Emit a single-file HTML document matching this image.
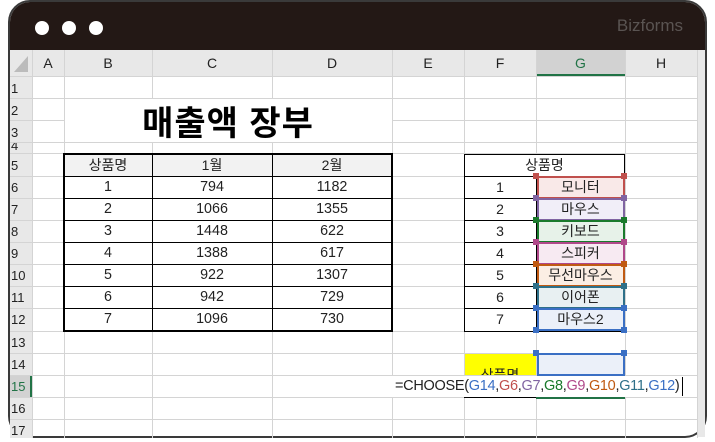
<!DOCTYPE html>
<html><head><meta charset="utf-8"><style>
*{margin:0;padding:0;box-sizing:border-box}
body{width:715px;height:440px;background:#fff;position:relative;overflow:hidden;font-family:"Liberation Sans","Noto Sans CJK KR",sans-serif}
.win{position:absolute;left:8px;top:0;width:699px;height:438px;border:2px solid #3a3a3a;border-radius:22px;overflow:hidden;background:#fff}
.bar{position:absolute;left:0;top:0;width:100%;height:48px;background:#231815}
.dot{position:absolute;top:19px;width:14px;height:14px;border-radius:50%;background:#fff}
.abs{position:absolute}
.t{position:absolute;font-size:14px;color:#222;text-align:center;display:flex;align-items:center;justify-content:center}
</style></head><body>
<div class="win">
<div class="bar"></div>
<div class="dot" style="left:25px"></div><div class="dot" style="left:52px"></div><div class="dot" style="left:79px"></div>
<div class="abs" style="right:22px;top:14px;color:#5a5452;font-size:17px">Bizforms</div>
</div>
<svg class="abs" style="left:0;top:0" width="715" height="440">
<rect x="10" y="50" width="687" height="26" fill="#e8e8e8"/>
<rect x="10" y="76" width="22" height="362" fill="#e8e8e8"/>
<rect x="536" y="50" width="89" height="26" fill="#d2d2d2"/>
<rect x="536" y="74" width="89" height="2" fill="#217346"/>
<rect x="10" y="375" width="22" height="22" fill="#d2d2d2"/>
<rect x="30" y="375" width="2" height="22" fill="#217346"/>
<polygon points="28,56 28,72 14,72" fill="#bbb"/>
<rect x="697" y="50" width="8" height="387" fill="#e8e8e8"/>
<g stroke="#d4d4d4" stroke-width="1">
<line x1="32.5" y1="50" x2="32.5" y2="438"/><line x1="64.5" y1="50" x2="64.5" y2="438"/><line x1="152.5" y1="50" x2="152.5" y2="438"/><line x1="272.5" y1="50" x2="272.5" y2="438"/><line x1="392.5" y1="50" x2="392.5" y2="438"/><line x1="464.5" y1="50" x2="464.5" y2="438"/><line x1="536.5" y1="50" x2="536.5" y2="438"/><line x1="625.5" y1="50" x2="625.5" y2="438"/><line x1="697.5" y1="50" x2="697.5" y2="438"/>
<line x1="10" y1="76.5" x2="697" y2="76.5"/><line x1="10" y1="98.5" x2="697" y2="98.5"/><line x1="10" y1="120.5" x2="697" y2="120.5"/><line x1="10" y1="142.5" x2="697" y2="142.5"/><line x1="10" y1="153.5" x2="697" y2="153.5"/><line x1="10" y1="176.5" x2="697" y2="176.5"/><line x1="10" y1="198.5" x2="697" y2="198.5"/><line x1="10" y1="220.5" x2="697" y2="220.5"/><line x1="10" y1="242.5" x2="697" y2="242.5"/><line x1="10" y1="264.5" x2="697" y2="264.5"/><line x1="10" y1="286.5" x2="697" y2="286.5"/><line x1="10" y1="308.5" x2="697" y2="308.5"/><line x1="10" y1="331.5" x2="697" y2="331.5"/><line x1="10" y1="353.5" x2="697" y2="353.5"/><line x1="10" y1="375.5" x2="697" y2="375.5"/><line x1="10" y1="397.5" x2="697" y2="397.5"/><line x1="10" y1="419.5" x2="697" y2="419.5"/>
</g>
<rect x="65" y="99" width="327" height="43" fill="#fff"/>
<rect x="64" y="154" width="328" height="22" fill="#f2f2f2"/>
<g fill="none" stroke="#000">
<rect x="64" y="154" width="328" height="177" stroke-width="2"/>
<g stroke-width="1"><line x1="152.5" y1="154" x2="152.5" y2="331"/><line x1="272.5" y1="154" x2="272.5" y2="331"/>
<line x1="64" y1="176.5" x2="392" y2="176.5"/><line x1="64" y1="198.5" x2="392" y2="198.5"/><line x1="64" y1="220.5" x2="392" y2="220.5"/><line x1="64" y1="242.5" x2="392" y2="242.5"/><line x1="64" y1="264.5" x2="392" y2="264.5"/><line x1="64" y1="286.5" x2="392" y2="286.5"/><line x1="64" y1="308.5" x2="392" y2="308.5"/>
<rect x="464.5" y="154.5" width="160" height="177"/>
<line x1="464" y1="176.5" x2="536" y2="176.5"/><line x1="464" y1="198.5" x2="536" y2="198.5"/><line x1="464" y1="220.5" x2="536" y2="220.5"/><line x1="464" y1="242.5" x2="536" y2="242.5"/><line x1="464" y1="264.5" x2="536" y2="264.5"/><line x1="464" y1="286.5" x2="536" y2="286.5"/><line x1="464" y1="308.5" x2="536" y2="308.5"/><line x1="536.5" y1="176" x2="536.5" y2="331"/></g>
</g>
<rect x="465" y="155" width="159" height="21" fill="#fff"/>
<g stroke-width="2">
<rect x="538" y="177" width="86" height="21" fill="#f9e9e8" stroke="#c0504d"/>
<rect x="538" y="199" width="86" height="21" fill="#f1eef8" stroke="#8064a2"/>
<rect x="538" y="221" width="86" height="21" fill="#e7f2e9" stroke="#1a7a2c"/>
<rect x="538" y="243" width="86" height="21" fill="#f7eaf2" stroke="#b0488a"/>
<rect x="538" y="265" width="86" height="21" fill="#fbeee4" stroke="#c05a12"/>
<rect x="538" y="287" width="86" height="21" fill="#e8f0f2" stroke="#2e7089"/>
<rect x="538" y="309" width="86" height="21" fill="#ebf0f9" stroke="#3a6fc4"/>
<rect x="538" y="354" width="86" height="21" fill="#ebf0f9" stroke="#3a6fc4"/>
</g>
<rect x="465" y="354" width="71" height="21" fill="#ffff00"/>
<g fill="#3a6fc4"><rect x="533" y="173" width="6" height="6" fill="#c0504d"/><rect x="621" y="173" width="6" height="6" fill="#c0504d"/><rect x="533" y="195" width="6" height="6" fill="#8064a2"/><rect x="621" y="195" width="6" height="6" fill="#8064a2"/><rect x="533" y="217" width="6" height="6" fill="#1a7a2c"/><rect x="621" y="217" width="6" height="6" fill="#1a7a2c"/><rect x="533" y="239" width="6" height="6" fill="#b0488a"/><rect x="621" y="239" width="6" height="6" fill="#b0488a"/><rect x="533" y="261" width="6" height="6" fill="#c05a12"/><rect x="621" y="261" width="6" height="6" fill="#c05a12"/><rect x="533" y="283" width="6" height="6" fill="#2e7089"/><rect x="621" y="283" width="6" height="6" fill="#2e7089"/><rect x="533" y="305" width="6" height="6"/><rect x="621" y="305" width="6" height="6"/><rect x="533" y="327" width="6" height="6"/><rect x="621" y="327" width="6" height="6"/><rect x="533" y="350" width="6" height="6"/><rect x="621" y="350" width="6" height="6"/></g>
<rect x="536" y="396" width="89" height="3" fill="#217346"/>
<rect x="392" y="376" width="293" height="21" fill="#fff"/>
<line x1="464" y1="397.5" x2="536" y2="397.5" stroke="#000"/>
<line x1="682.5" y1="377" x2="682.5" y2="396" stroke="#000"/>
</svg>
<div class="t" style="left:32px;top:50px;width:32px;height:26px">A</div>
<div class="t" style="left:64px;top:50px;width:88px;height:26px">B</div>
<div class="t" style="left:152px;top:50px;width:120px;height:26px">C</div>
<div class="t" style="left:272px;top:50px;width:120px;height:26px">D</div>
<div class="t" style="left:392px;top:50px;width:72px;height:26px">E</div>
<div class="t" style="left:464px;top:50px;width:72px;height:26px">F</div>
<div class="t" style="left:536px;top:50px;width:89px;height:26px;color:#217346">G</div>
<div class="t" style="left:625px;top:50px;width:72px;height:26px">H</div>
<div style="position:absolute;left:11px;top:0;font-size:13px;color:#222;line-height:22px">
<div style="position:absolute;top:78px">1</div><div style="position:absolute;top:100px">2</div><div style="position:absolute;top:122px">3</div><div style="position:absolute;top:143px;height:10px;overflow:hidden;line-height:0;padding-top:0"><div style="margin-top:-4px;line-height:13px">4</div></div><div style="position:absolute;top:155px">5</div><div style="position:absolute;top:177px">6</div><div style="position:absolute;top:199px">7</div><div style="position:absolute;top:221px">8</div><div style="position:absolute;top:243px">9</div><div style="position:absolute;top:265px">10</div><div style="position:absolute;top:287px">11</div><div style="position:absolute;top:309px">12</div><div style="position:absolute;top:332px">13</div><div style="position:absolute;top:354px">14</div><div style="position:absolute;top:376px;color:#217346">15</div><div style="position:absolute;top:398px">16</div><div style="position:absolute;top:420px">17</div>
</div>
<div class="t" style="left:64px;top:98px;width:328px;height:44px;font-size:34px;font-weight:bold;color:#000;letter-spacing:1px">매출액 장부</div>
<div class="t" style="left:64px;top:154px;width:88px;height:22px">상품명</div>
<div class="t" style="left:152px;top:154px;width:120px;height:22px">1월</div>
<div class="t" style="left:272px;top:154px;width:120px;height:22px">2월</div>
<div style="position:absolute;left:64px;top:176px;width:328px;font-size:14.3px;color:#222">
<div style="display:grid;grid-template-columns:88px 120px 120px;grid-auto-rows:22px;text-align:center;line-height:22px">
<div>1</div><div>794</div><div>1182</div><div>2</div><div>1066</div><div>1355</div><div>3</div><div>1448</div><div>622</div><div>4</div><div>1388</div><div>617</div><div>5</div><div>922</div><div>1307</div><div>6</div><div>942</div><div>729</div><div>7</div><div>1096</div><div>730</div></div></div>
<div class="t" style="left:464px;top:154px;width:161px;height:22px">상품명</div>
<div style="position:absolute;left:464px;top:176px;width:161px;font-size:14px;color:#222">
<div style="display:grid;grid-template-columns:72px 89px;grid-auto-rows:22px;text-align:center;line-height:22px">
<div>1</div><div>모니터</div><div>2</div><div>마우스</div><div>3</div><div>키보드</div><div>4</div><div>스피커</div><div>5</div><div>무선마우스</div><div>6</div><div>이어폰</div><div>7</div><div>마우스2</div></div></div>
<div style="position:absolute;left:464px;top:354px;width:72px;height:21px;overflow:hidden;text-align:center;font-size:14px;line-height:42px;color:#222">상품명</div>
<div style="position:absolute;left:395px;top:376px;font-size:14.5px;line-height:21px;color:#222;letter-spacing:-0.3px;white-space:nowrap">=CHOOSE(<span style="color:#3a6fc4">G14</span>,<span style="color:#c0504d">G6</span>,<span style="color:#8064a2">G7</span>,<span style="color:#1a7a2c">G8</span>,<span style="color:#b0488a">G9</span>,<span style="color:#c05a12">G10</span>,<span style="color:#2e7089">G11</span>,<span style="color:#3a6fc4">G12</span>)</div>
</body></html>
